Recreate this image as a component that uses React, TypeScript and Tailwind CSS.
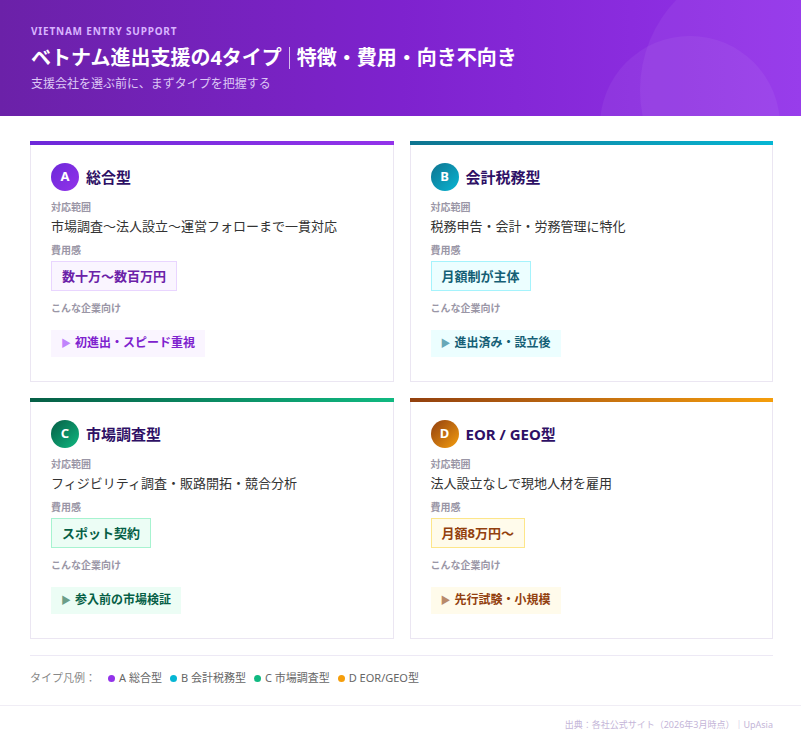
import React from "react";

const cards = [
  { l: "A", t: "総合型", scope: "市場調査〜法人設立〜運営フォロー まで一貫対応".replace(" ", ""), cost: "数十万〜数百万円", target: "初進出・スピード重視",
    bar: "bg-gradient-to-r from-[#6d28d9] to-[#9333ea]", circ: "bg-gradient-to-br from-[#6d28d9] to-[#9333ea]",
    badge: "bg-[#faf5ff] border-[#e9d5ff] text-[#6b21a8]", tag: "bg-[#faf5ff] text-[#7e22ce]", arrow: "text-[#c084fc]" },
  { l: "B", t: "会計税務型", scope: "税務申告・会計・労務管理に特化", cost: "月額制が主体", target: "進出済み・設立後",
    bar: "bg-gradient-to-r from-[#0e7490] to-[#06b6d4]", circ: "bg-gradient-to-br from-[#0e7490] to-[#06b6d4]",
    badge: "bg-[#ecfeff] border-[#a5f3fc] text-[#155e75]", tag: "bg-[#ecfeff] text-[#155e75]", arrow: "text-[#67a8b8]" },
  { l: "C", t: "市場調査型", scope: "フィジビリティ調査・販路開拓・競合分析", cost: "スポット契約", target: "参入前の市場検証",
    bar: "bg-gradient-to-r from-[#065f46] to-[#10b981]", circ: "bg-gradient-to-br from-[#065f46] to-[#10b981]",
    badge: "bg-[#ecfdf5] border-[#a7f3d0] text-[#065f46]", tag: "bg-[#ecfdf5] text-[#065f46]", arrow: "text-[#6b9e88]" },
  { l: "D", t: "EOR / GEO型", scope: "法人設立なしで現地人材を雇用", cost: "月額8万円〜", target: "先行試験・小規模",
    bar: "bg-gradient-to-r from-[#92400e] to-[#f59e0b]", circ: "bg-gradient-to-br from-[#92400e] to-[#f59e0b]",
    badge: "bg-[#fffbeb] border-[#fde68a] text-[#92400e]", tag: "bg-[#fffbeb] text-[#92400e]", arrow: "text-[#b98a6a]" },
];

export default function App() {
  return (
    <div className="w-[801px] h-[744px] bg-white overflow-hidden" style={{ fontFamily: '"Noto Sans", "Noto Sans CJK JP", sans-serif' }}>
      <div className="relative h-[116px] overflow-hidden bg-gradient-to-r from-[#6b21a8] via-[#7e22ce] to-[#9333ea] px-[31px] pt-[24px]">
        <div className="absolute left-[640px] top-[-40px] w-[260px] h-[260px] rounded-full bg-white/5" />
        <div className="absolute left-[600px] top-[36px] w-[180px] h-[180px] rounded-full bg-white/5" />
        <div className="relative text-[10px] font-bold tracking-[0.08em] text-[#d8b4fe]">VIETNAM ENTRY SUPPORT</div>
        <div className="relative mt-[4px] text-[20px] leading-[30px] font-bold text-white flex items-center">
          ベトナム進出支援の4タイプ<span className="mx-[7px] inline-block w-px h-[22px] bg-white/70" />特徴・費用・向き不向き
        </div>
        <div className="relative mt-[2px] text-[12px] text-[#ddc8f5]">支援会社を選ぶ前に、まずタイプを把握する</div>
      </div>
      <div className="px-[30px] pr-[28px] pt-[25px] grid grid-cols-2 gap-x-[16px] gap-y-[16px]">
        {cards.map((c) => (
          <div key={c.l} className="h-[241px] border border-[#ebe6f2] border-t-0 flex flex-col">
            <div className={`h-[4px] -mx-px ${c.bar}`} />
            <div className="px-[20px] pt-[18px]">
              <div className="flex items-center gap-[7px]">
                <div className={`w-[28px] h-[28px] rounded-full ${c.circ} text-white text-[13px] font-bold flex items-center justify-center`}>{c.l}</div>
                <div className="text-[15px] font-bold text-[#2e1065]">{c.t}</div>
              </div>
              <div className="mt-[9px] text-[10px] font-bold text-[#9a96a6]">対応範囲</div>
              <div className="mt-[2px] text-[13px] text-[#333]">{c.scope}</div>
              <div className="mt-[6px] text-[10px] font-bold text-[#9a96a6]">費用感</div>
              <div className={`mt-[3px] inline-block border px-[10px] h-[30px] leading-[28px] text-[13px] font-bold ${c.badge}`}>{c.cost}</div>
              <div className="mt-[10px] text-[10px] font-bold text-[#9a96a6]">こんな企業向け</div>
              <div className={`mt-[14px] inline-flex items-center h-[27px] px-[10px] text-[12px] font-bold ${c.tag}`}>
                <span className={`text-[10px] mr-[4px] ${c.arrow}`}>▶</span>{c.target}
              </div>
            </div>
          </div>
        ))}
      </div>
      <div className="mx-[30px] mr-[28px] mt-[16px] border-t border-[#ede9f5] pt-[14px] flex items-center gap-[8px] text-[11px] text-[#666]">
        <span className="text-[#888] mr-[4px]">タイプ凡例：</span>
        {[["A 総合型", "bg-[#9333ea]"], ["B 会計税務型", "bg-[#06b6d4]"], ["C 市場調査型", "bg-[#10b981]"], ["D EOR/GEO型", "bg-[#f59e0b]"]].map(([t, b]) => (
          <span key={t} className="flex items-center gap-[4px]"><span className={`w-[7px] h-[7px] rounded-full ${b}`} />{t}</span>
        ))}
      </div>
      <div className="mt-[18px] border-t border-[#f0edf5] pt-[12px] pr-[28px] text-right text-[9px] text-[#c4b5d8]">
        出典：各社公式サイト（2026年3月時点）｜UpAsia
      </div>
    </div>
  );
}
